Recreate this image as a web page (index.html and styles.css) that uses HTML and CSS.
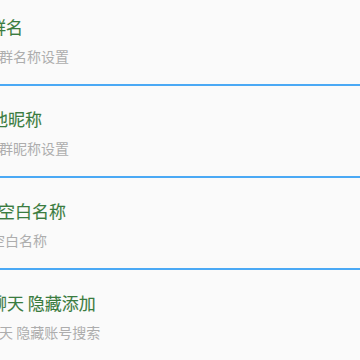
FILE: index.html
```html
<!DOCTYPE html>
<html lang="zh">
<head>
<meta charset="utf-8">
<link rel="stylesheet" href="styles.css">
</head>
<body>
<div class="list">
  <div class="row r1">
    <div class="title">群名</div>
    <div class="sub">群名称设置</div>
  </div>
  <div class="row r2">
    <div class="title">他昵称</div>
    <div class="sub">群昵称设置</div>
  </div>
  <div class="row r3">
    <div class="title">空白名称</div>
    <div class="sub">空白名称</div>
  </div>
  <div class="row r4">
    <div class="title">聊天 隐藏添加</div>
    <div class="sub">天 隐藏账号搜索</div>
  </div>
</div>
</body>
</html>
```
FILE: styles.css
```css
html, body {
  margin: 0;
  padding: 0;
  background: #fafafa;
  overflow: hidden;
  width: 360px;
  height: 360px;
}
.list {
  margin-top: -6px;
  font-family: "Noto Sans CJK SC", "Noto Sans", sans-serif;
}
.row {
  padding: 21px 0 18px 0;
  border-bottom: 2px solid #4aa9f5;
  white-space: nowrap;
}
.title {
  font-size: 17px;
  line-height: 24px;
  font-weight: 400;
  color: #3a7c3f;
  -webkit-text-stroke: 0.12px #3a7c3f;
}
.sub {
  margin-top: 7px;
  font-size: 14px;
  line-height: 20px;
  color: #adadad;
}
.r1 .title { margin-left: -11px; }
.r1 .sub { margin-left: -1px; }
.r2 .title { margin-left: -9px; }
.r2 .sub { margin-left: -1px; }
.r3 .title { margin-left: -2px; }
.r3 .sub { margin-left: -9px; }
.r4 .title { margin-left: -10px; }
.r4 .sub { margin-left: -1px; }
```
